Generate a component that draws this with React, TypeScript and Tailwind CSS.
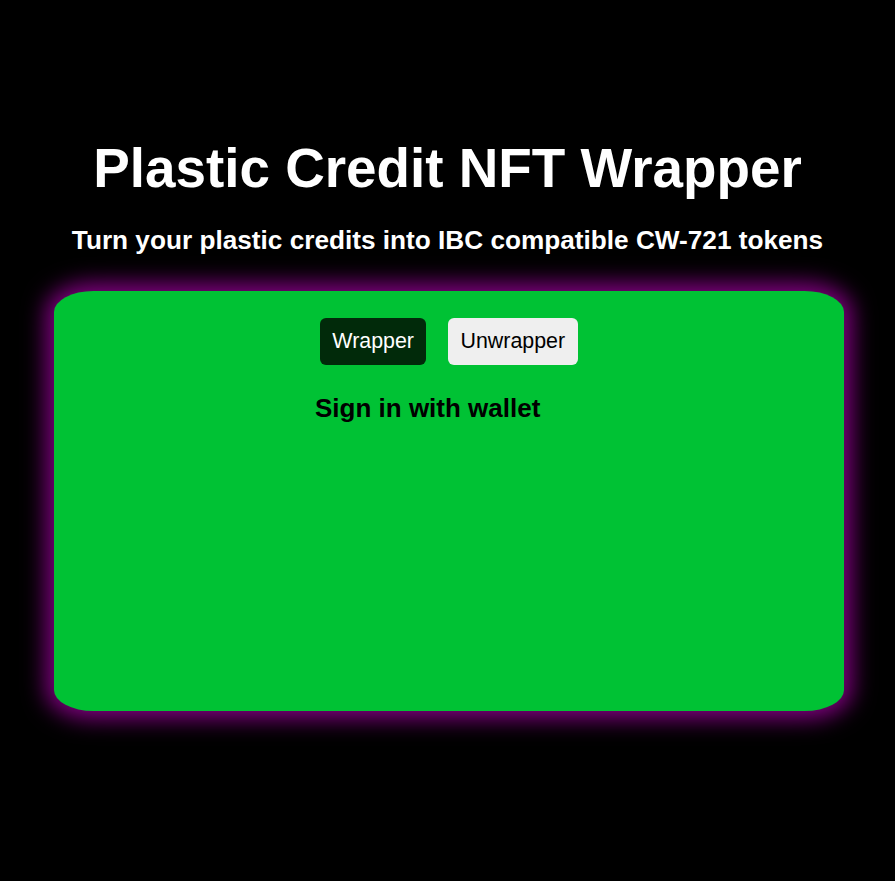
import React, { useState } from "react";

const App = () => {
  const [mode, setMode] = useState<"wrap" | "unwrap">("wrap");

  return (
    <div
      className="min-h-screen bg-black pt-[141px] text-center"
      style={{ fontFamily: '"Liberation Sans", Arial, sans-serif' }}
    >
      <h1 className="text-[54.8px] font-bold leading-[1] text-white">
        Plastic Credit NFT Wrapper
      </h1>
      <h2 className="mt-[31.5px] text-[26.2px] font-bold leading-[1] text-white">
        Turn your plastic credits into IBC compatible CW-721 tokens
      </h2>

      <div className="ml-[54px] mt-[37px] h-[420px] w-[790px] rounded-[5%] bg-[#00c234] pt-[27px] shadow-[0_0_22px_8px_#800080]">
        <div className="flex justify-center gap-[22px]">
          <button
            onClick={() => setMode("wrap")}
            className={
              mode === "wrap"
                ? "rounded-[6px] bg-[#012a0a] px-[12px] py-[11.7px] text-[21.4px] leading-[24.6px] text-white"
                : "rounded-[6px] bg-[#efefef] px-[12px] py-[11.7px] text-[21.4px] leading-[24.6px] text-black"
            }
          >
            Wrapper
          </button>
          <button
            onClick={() => setMode("unwrap")}
            className={
              mode === "unwrap"
                ? "rounded-[6px] bg-[#012a0a] px-[12.5px] py-[11.7px] text-[21.4px] leading-[24.6px] text-white"
                : "rounded-[6px] bg-[#efefef] px-[12.5px] py-[11.7px] text-[21.4px] leading-[24.6px] text-black"
            }
          >
            Unwrapper
          </button>
        </div>
        <h3 className="mt-[30px] pl-[261px] text-left text-[26px] font-bold leading-[1] text-black">
          Sign in with wallet
        </h3>
      </div>
    </div>
  );
};

export default App;
